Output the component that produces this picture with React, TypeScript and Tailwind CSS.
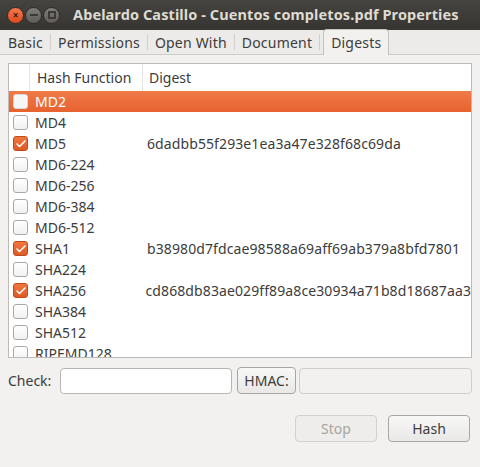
import { Check } from 'lucide-react';

const rows: { name: string; digest?: string; checked?: boolean }[] = [
  { name: 'MD2' },
  { name: 'MD4' },
  { name: 'MD5', digest: '6dadbb55f293e1ea3a47e328f68c69da', checked: true },
  { name: 'MD6-224' },
  { name: 'MD6-256' },
  { name: 'MD6-384' },
  { name: 'MD6-512' },
  { name: 'SHA1', digest: 'b38980d7fdcae98588a69aff69ab379a8bfd7801', checked: true },
  { name: 'SHA224' },
  { name: 'SHA256', digest: 'cd868db83ae029ff89a8ce30934a71b8d18687aa3', checked: true },
  { name: 'SHA384' },
  { name: 'SHA512' },
  { name: 'RIPEMD128' },
];

const tabs = ['Basic', 'Permissions', 'Open With', 'Document'];

const Box = ({ checked, selected }: { checked?: boolean; selected?: boolean }) => {
  if (checked)
    return (
      <span className="w-[15px] h-[15px] rounded-[3px] bg-gradient-to-b from-[#f0763f] to-[#dd5a26] border border-[#c2491c] flex items-center justify-center shrink-0">
        <Check size={12} strokeWidth={3} className="text-white" />
      </span>
    );
  return (
    <span
      className={`w-[15px] h-[15px] rounded-[3px] border shrink-0 ${
        selected ? 'bg-[#f6f6f6] border-[#d8d8d8]' : 'bg-gradient-to-b from-white to-[#f1f1f1] border-[#a9a9a9]'
      }`}
    />
  );
};

export default function App() {
  return (
    <div className="w-[480px] h-[467px] bg-[#f2f1f0] flex flex-col overflow-hidden text-[14px] text-[#3c3c3c] font-['Noto_Sans',sans-serif]">
      {/* Title bar */}
      <div className="h-[30px] shrink-0 bg-gradient-to-b from-[#45443f] to-[#363531] flex items-center pl-[7px]">
        <div className="flex items-center gap-[1px]">
          <span className="w-[17px] h-[17px] rounded-full bg-gradient-to-b from-[#f5784a] to-[#dc4a1c] border border-[#2f2e2b] flex items-center justify-center text-[#3a1a0c] text-[10px] font-bold leading-none">
            ×
          </span>
          <span className="w-[17px] h-[17px] rounded-full bg-gradient-to-b from-[#7e7d78] to-[#5d5c57] border border-[#2f2e2b] flex items-center justify-center">
            <span className="w-[8px] h-[2px] bg-[#3b3a36]" />
          </span>
          <span className="w-[17px] h-[17px] rounded-full bg-gradient-to-b from-[#7e7d78] to-[#5d5c57] border border-[#2f2e2b] flex items-center justify-center">
            <span className="w-[8px] h-[8px] border-2 border-[#3b3a36] rounded-[1px]" />
          </span>
        </div>
        <span className="ml-[13px] text-[#dfdbd2] font-bold text-[14.5px] tracking-[0.1px] whitespace-nowrap">
          Abelardo Castillo - Cuentos completos.pdf Properties
        </span>
      </div>

      {/* Tabs */}
      <div className="h-[25px] shrink-0 flex items-end px-[4px] border-b border-[#cfcdc9] bg-[#ecebe9]">
        {tabs.map((t) => (
          <div key={t} className="flex items-center h-full">
            <span className="px-[4px] tracking-[0.2px] whitespace-nowrap">{t}</span>
            <span className="w-px h-[16px] bg-[#d2d0cc] mx-[3px]" />
          </div>
        ))}
        <div className="h-[26px] -mb-px px-[7px] flex items-center bg-[#f2f1f0] border border-b-0 border-[#c4c2be] rounded-t-[4px] tracking-[0.2px] whitespace-nowrap">
          Digests
        </div>
      </div>

      {/* Content */}
      <div className="flex-1 flex flex-col px-[8px] pt-[8px]">
        <div className="h-[295px] bg-white border border-[#bdbbb7] flex flex-col overflow-hidden">
          <div className="h-[27px] shrink-0 flex items-center">
            <div className="w-[21px] h-full border-r border-[#e4e3e1]" />
            <div className="w-[113px] h-full flex items-center pl-[7px] border-r border-[#e4e3e1]">Hash Function</div>
            <div className="flex-1 pl-[6px]">Digest</div>
          </div>
          {rows.map((r, i) => {
            const sel = i === 0;
            return (
              <div
                key={r.name}
                className={`h-[21px] shrink-0 flex items-center pl-[4px] ${
                  sel ? 'bg-gradient-to-b from-[#f07a4a] to-[#e7622e] text-white' : ''
                }`}
              >
                <Box checked={r.checked} selected={sel} />
                <span className="w-[119px] pl-[7px] whitespace-nowrap">{r.name}</span>
                <span className="whitespace-nowrap tracking-[0.1px]">{r.digest}</span>
              </div>
            );
          })}
        </div>

        <div className="mt-[9px] flex items-center h-[27px]">
          <span className="w-[52px] shrink-0">Check:</span>
          <div className="w-[172px] h-[26px] bg-white border border-[#b8b6b2] rounded-[4px]" />
          <button className="ml-[5px] w-[59px] h-[27px] rounded-[4px] border border-[#a8a6a2] bg-gradient-to-b from-[#f8f8f7] to-[#e9e8e6] text-[#3c3c3c]">
            HMAC:
          </button>
          <div className="ml-[3px] flex-1 h-[26px] bg-[#f2f1f0] border border-[#cfcdc9] rounded-[4px]" />
        </div>

        <div className="mt-[21px] flex justify-end gap-[11px] pr-[2px]">
          <button className="w-[82px] h-[27px] rounded-[4px] border border-[#d3d1cd] bg-[#eeedeb] text-[#a7a5a1]">Stop</button>
          <button className="w-[82px] h-[27px] rounded-[4px] border border-[#a8a6a2] bg-gradient-to-b from-[#f8f8f7] to-[#e9e8e6] text-[#3c3c3c]">
            Hash
          </button>
        </div>
      </div>
    </div>
  );
}
